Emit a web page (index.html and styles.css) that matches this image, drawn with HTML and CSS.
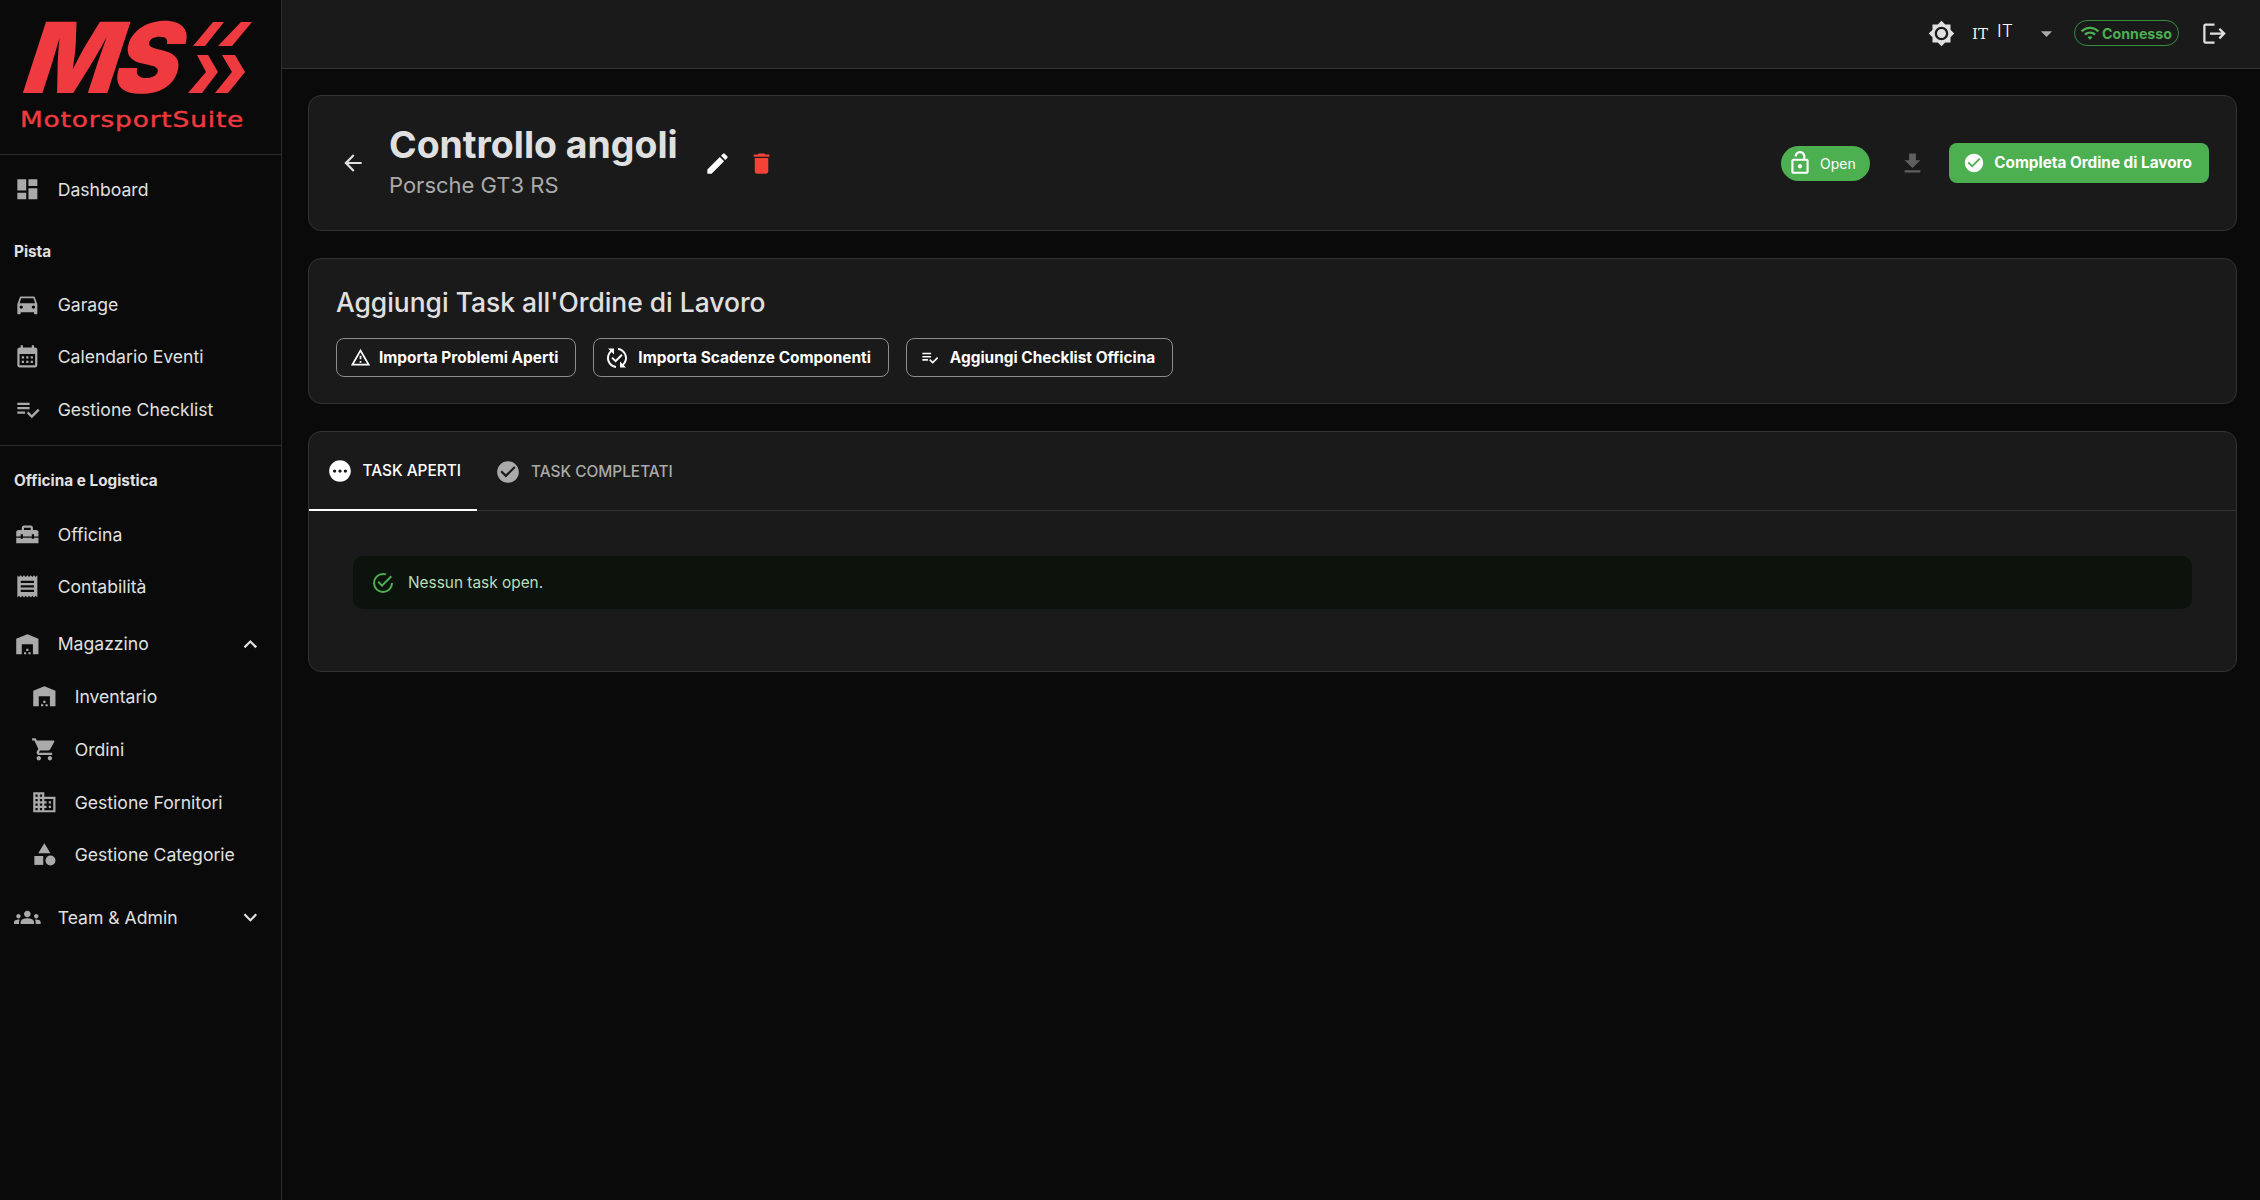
FILE: index.html
```html
<!DOCTYPE html>
<html lang="it">

<head>
    <meta charset="UTF-8">
    <meta name="viewport" content="width=device-width, initial-scale=1.0">
    <title>MotorsportSuite</title>
    <link rel="stylesheet" href="styles.css">
</head>

<body>
    <!-- Sidebar -->
    <aside class="sidebar">
        <div class="logo">
            <div class="logo-mark">
                <span class="logo-ms">MS</span>
                <svg class="logo-chevrons" viewBox="0 0 64 72">
                    <polygon points="25,0 36,0 17,24 5,24" />
                    <polygon points="53,0 64,0 44,24 30,24" />
                    <polygon points="9,33 20,33 30,50 14,71 0,71 18,50" />
                    <polygon points="34,33 47,33 57,50 40,71 27,71 44,50" />
                </svg>
            </div>
            <div class="logo-name">MotorsportSuite</div>
        </div>

        <nav class="nav">
            <a class="nav-item">
                <svg class="nav-icon" viewBox="0 0 24 24"><path d="M3 13h8V3H3v10zm0 8h8v-6H3v6zm10 0h8V11h-8v10zm0-18v6h8V3h-8z" /></svg>
                Dashboard
            </a>

            <div class="nav-label">Pista</div>
            <a class="nav-item">
                <svg class="nav-icon" viewBox="0 0 24 24"><path d="M18.92 6.01C18.72 5.42 18.16 5 17.5 5h-11c-.66 0-1.21.42-1.42 1.01L3 12v8c0 .55.45 1 1 1h1c.55 0 1-.45 1-1v-1h12v1c0 .55.45 1 1 1h1c.55 0 1-.45 1-1v-8l-2.08-5.99zM6.5 16c-.83 0-1.5-.67-1.5-1.5S5.67 13 6.5 13s1.5.67 1.5 1.5S7.33 16 6.5 16zm11 0c-.83 0-1.5-.67-1.5-1.5s.67-1.5 1.5-1.5 1.5.67 1.5 1.5-.67 1.5-1.5 1.5zM5 11l1.5-4.5h11L19 11H5z" /></svg>
                Garage
            </a>
            <a class="nav-item">
                <svg class="nav-icon" viewBox="0 0 24 24"><path d="M19 4h-1V2h-2v2H8V2H6v2H5c-1.11 0-1.99.9-1.99 2L3 20c0 1.1.89 2 2 2h14c1.1 0 2-.9 2-2V6c0-1.1-.9-2-2-2zm0 16H5V10h14v10zM9 14H7v-2h2v2zm4 0h-2v-2h2v2zm4 0h-2v-2h2v2zm-8 4H7v-2h2v2zm4 0h-2v-2h2v2zm4 0h-2v-2h2v2z" /></svg>
                Calendario Eventi
            </a>
            <a class="nav-item">
                <svg class="nav-icon" viewBox="0 0 24 24"><path d="M14 10H3v2h11v-2zm0-4H3v2h11V6zM3 16h7v-2H3v2zm18.5-4.5L23 13l-6.99 7-4.51-4.5L13 14l3.01 3 5.49-5.5z" /></svg>
                Gestione Checklist
            </a>

            <hr class="nav-divider">

            <div class="nav-label">Officina e Logistica</div>
            <a class="nav-item">
                <svg class="nav-icon" viewBox="0 0 24 24"><path d="M18 16h-2v-1H8v1H6v-1H2v5h20v-5h-4zm2-8h-3V6c0-1.1-.9-2-2-2H9c-1.1 0-2 .9-2 2v2H4c-1.1 0-2 .9-2 2v4h4v-2h2v2h8v-2h2v2h4v-4c0-1.1-.9-2-2-2zm-5 0H9V6h6v2z" /></svg>
                Officina
            </a>
            <a class="nav-item">
                <svg class="nav-icon" viewBox="0 0 24 24"><path d="M18 17H6v-2h12v2zm0-4H6v-2h12v2zm0-4H6V7h12v2zM3 22l1.5-1.5L6 22l1.5-1.5L9 22l1.5-1.5L12 22l1.5-1.5L15 22l1.5-1.5L18 22l1.5-1.5L21 22V2l-1.5 1.5L18 2l-1.5 1.5L15 2l-1.5 1.5L12 2l-1.5 1.5L9 2 7.5 3.5 6 2 4.5 3.5 3 2v20z" /></svg>
                Contabilità
            </a>
            <a class="nav-item nav-group">
                <svg class="nav-icon" viewBox="0 0 24 24"><path d="M22 21V7L12 3 2 7v14h5v-9h10v9h5zm-11-2H9v2h2v-2zm2-3h-2v2h2v-2zm2 3h-2v2h2v-2z" /></svg>
                Magazzino
                <svg class="nav-caret" viewBox="0 0 24 24"><path d="M12 8l-6 6 1.41 1.41L12 10.83l4.59 4.58L18 14z" /></svg>
            </a>
            <a class="nav-item nav-sub">
                <svg class="nav-icon" viewBox="0 0 24 24"><path d="M22 21V7L12 3 2 7v14h5v-9h10v9h5zm-11-2H9v2h2v-2zm2-3h-2v2h2v-2zm2 3h-2v2h2v-2z" /></svg>
                Inventario
            </a>
            <a class="nav-item nav-sub">
                <svg class="nav-icon" viewBox="0 0 24 24"><path d="M7 18c-1.1 0-1.99.9-1.99 2S5.9 22 7 22s2-.9 2-2-.9-2-2-2zM1 2v2h2l3.6 7.59-1.35 2.45c-.16.28-.25.61-.25.96 0 1.1.9 2 2 2h12v-2H7.42c-.14 0-.25-.11-.25-.25l.03-.12.9-1.63h7.45c.75 0 1.41-.41 1.75-1.03l3.58-6.49c.08-.14.12-.31.12-.48 0-.55-.45-1-1-1H5.21l-.94-2H1zm16 16c-1.1 0-1.99.9-1.99 2s.89 2 1.99 2 2-.9 2-2-.9-2-2-2z" /></svg>
                Ordini
            </a>
            <a class="nav-item nav-sub">
                <svg class="nav-icon" viewBox="0 0 24 24"><path d="M12 7V3H2v18h20V7H12zM6 19H4v-2h2v2zm0-4H4v-2h2v2zm0-4H4V9h2v2zm0-4H4V5h2v2zm4 12H8v-2h2v2zm0-4H8v-2h2v2zm0-4H8V9h2v2zm0-4H8V5h2v2zm10 12h-8v-2h2v-2h-2v-2h2v-2h-2V9h8v10zm-2-8h-2v2h2v-2zm0 4h-2v2h2v-2z" /></svg>
                Gestione Fornitori
            </a>
            <a class="nav-item nav-sub">
                <svg class="nav-icon" viewBox="0 0 24 24"><path d="M12 2l-5.5 9h11z" /><circle cx="17.5" cy="17.5" r="4.5" /><path d="M3 13.5h8v8H3z" /></svg>
                Gestione Categorie
            </a>
            <a class="nav-item nav-group nav-team">
                <svg class="nav-icon" viewBox="0 0 24 24"><path d="M12 12.75c1.63 0 3.07.39 4.24.9 1.08.48 1.76 1.56 1.76 2.73V18H6v-1.61c0-1.18.68-2.26 1.76-2.73 1.17-.52 2.61-.91 4.24-.91zM4 13c1.1 0 2-.9 2-2s-.9-2-2-2-2 .9-2 2 .9 2 2 2zm1.13 1.1c-.37-.06-.74-.1-1.13-.1-.99 0-1.93.21-2.78.58C.48 14.9 0 15.62 0 16.43V18h4.5v-1.61c0-.83.23-1.61.63-2.29zM20 13c1.1 0 2-.9 2-2s-.9-2-2-2-2 .9-2 2 .9 2 2 2zm4 3.43c0-.81-.48-1.53-1.22-1.85-.85-.37-1.79-.58-2.78-.58-.39 0-.76.04-1.13.1.4.68.63 1.46.63 2.29V18H24v-1.57zM12 6c1.66 0 3 1.34 3 3s-1.34 3-3 3-3-1.34-3-3 1.34-3 3-3z" /></svg>
                Team &amp; Admin
                <svg class="nav-caret" viewBox="0 0 24 24"><path d="M16.59 8.59L12 13.17 7.41 8.59 6 10l6 6 6-6z" /></svg>
            </a>
        </nav>
    </aside>

    <div class="page">
        <!-- Top bar -->
        <header class="topbar">
            <svg class="theme-icon" viewBox="0 0 24 24"><path d="M20 8.69V4h-4.69L12 .69 8.69 4H4v4.69L.69 12 4 15.31V20h4.69L12 23.31 15.31 20H20v-4.69L23.31 12 20 8.69zM12 18c-3.31 0-6-2.69-6-6s2.69-6 6-6 6 2.69 6 6-2.69 6-6 6zm0-10c-2.21 0-4 1.79-4 4s1.79 4 4 4 4-1.79 4-4-1.79-4-4-4z" /></svg>
            <div class="lang">
                <span class="lang-flag">IT</span>
                <span class="lang-code">IT</span>
                <svg class="lang-arrow" viewBox="0 0 24 24"><path d="M7 10l5 5 5-5z" /></svg>
            </div>
            <div class="status-chip">
                <svg viewBox="0 0 24 24"><path d="M1 9l2 2c4.97-4.97 13.03-4.97 18 0l2-2C16.93 2.93 7.08 2.93 1 9zm8 8l3 3 3-3c-1.65-1.66-4.34-1.66-6 0zm-4-4l2 2c2.76-2.76 7.24-2.76 10 0l2-2C15.14 9.14 8.87 9.14 5 13z" /></svg>
                Connesso
            </div>
            <svg class="logout-icon" viewBox="0 0 24 24"><path d="M17 7l-1.41 1.41L18.17 11H8v2h10.17l-2.58 2.58L17 17l5-5zM4 5h8V3H4c-1.1 0-2 .9-2 2v14c0 1.1.9 2 2 2h8v-2H4V5z" /></svg>
        </header>

        <main class="content">
            <!-- Order header -->
            <section class="card order-head">
                <svg class="back-icon" viewBox="0 0 24 24"><path d="M20 11H7.83l5.59-5.59L12 4l-8 8 8 8 1.41-1.41L7.83 13H20v-2z" /></svg>
                <div class="order-title">
                    <h1>Controllo angoli</h1>
                    <p>Porsche GT3 RS</p>
                </div>
                <svg class="edit-icon" viewBox="0 0 24 24"><path d="M3 17.25V21h3.75L17.81 9.94l-3.75-3.75L3 17.25zM20.71 7.04c.39-.39.39-1.02 0-1.41l-2.34-2.34a.9959.9959 0 0 0-1.41 0l-1.83 1.83 3.75 3.75 1.83-1.83z" /></svg>
                <svg class="delete-icon" viewBox="0 0 24 24"><path d="M6 19c0 1.1.9 2 2 2h8c1.1 0 2-.9 2-2V7H6v12zM19 4h-3.5l-1-1h-5l-1 1H5v2h14V4z" /></svg>
                <div class="order-actions">
                    <span class="open-chip">
                        <svg viewBox="0 0 24 24"><path d="M18 8h-1V6c0-2.76-2.24-5-5-5S7 3.24 7 6h2c0-1.66 1.34-3 3-3s3 1.34 3 3v2H6c-1.1 0-2 .9-2 2v10c0 1.1.9 2 2 2h12c1.1 0 2-.9 2-2V10c0-1.1-.9-2-2-2zm0 12H6V10h12v10zm-6-3c1.1 0 2-.9 2-2s-.9-2-2-2-2 .9-2 2 .9 2 2 2z" /></svg>
                        Open
                    </span>
                    <svg class="download-icon" viewBox="0 0 24 24"><path d="M19 9h-4V3H9v6H5l7 7 7-7zM5 18v2h14v-2H5z" /></svg>
                    <button class="complete-btn">
                        <svg viewBox="0 0 24 24"><path d="M12 2C6.48 2 2 6.48 2 12s4.48 10 10 10 10-4.48 10-10S17.52 2 12 2zm-2 15l-5-5 1.41-1.41L10 14.17l7.59-7.59L19 8l-9 9z" /></svg>
                        Completa Ordine di Lavoro
                    </button>
                </div>
            </section>

            <!-- Add tasks -->
            <section class="card add-task">
                <h2>Aggiungi Task all'Ordine di Lavoro</h2>
                <div class="add-buttons">
                    <button class="outline-btn">
                        <svg viewBox="0 0 24 24"><path d="M12 5.99L19.53 19H4.47L12 5.99M12 2L1 21h22L12 2zm1 14h-2v2h2v-2zm0-6h-2v4h2v-4z" /></svg>
                        Importa Problemi Aperti
                    </button>
                    <button class="outline-btn btn-sync">
                        <svg viewBox="0 0 24 24"><path d="M17.66 9.53l-7.07 7.07-4.24-4.24 1.41-1.41 2.83 2.83 5.66-5.66 1.41 1.41zM4 12c0-2.33 1.02-4.42 2.62-5.88L9 8.5v-6H3l2.2 2.2C3.24 6.52 2 9.11 2 12c0 5.19 3.95 9.45 9 9.95v-2.02c-3.94-.49-7-3.86-7-7.93zm18 0c0-5.19-3.95-9.45-9-9.95v2.02c3.94.49 7 3.86 7 7.93 0 2.33-1.02 4.42-2.62 5.88L15 15.5v6h6l-2.2-2.2c1.96-1.82 3.2-4.41 3.2-7.3z" /></svg>
                        Importa Scadenze Componenti
                    </button>
                    <button class="outline-btn btn-list">
                        <svg viewBox="0 0 24 24"><path d="M14 10H3v2h11v-2zm0-4H3v2h11V6zM3 16h7v-2H3v2zm18.5-4.5L23 13l-6.99 7-4.51-4.5L13 14l3.01 3 5.49-5.5z" /></svg>
                        Aggiungi Checklist Officina
                    </button>
                </div>
            </section>

            <!-- Tasks -->
            <section class="card tasks">
                <div class="tabs">
                    <div class="tab tab-active">
                        <svg viewBox="0 0 24 24"><path d="M12 2C6.48 2 2 6.48 2 12s4.48 10 10 10 10-4.48 10-10S17.52 2 12 2zM7 13.5c-.83 0-1.5-.67-1.5-1.5s.67-1.5 1.5-1.5 1.5.67 1.5 1.5-.67 1.5-1.5 1.5zm5 0c-.83 0-1.5-.67-1.5-1.5s.67-1.5 1.5-1.5 1.5.67 1.5 1.5-.67 1.5-1.5 1.5zm5 0c-.83 0-1.5-.67-1.5-1.5s.67-1.5 1.5-1.5 1.5.67 1.5 1.5-.67 1.5-1.5 1.5z" /></svg>
                        TASK APERTI
                    </div>
                    <div class="tab">
                        <svg viewBox="0 0 24 24"><path d="M12 2C6.48 2 2 6.48 2 12s4.48 10 10 10 10-4.48 10-10S17.52 2 12 2zm-2 15l-5-5 1.41-1.41L10 14.17l7.59-7.59L19 8l-9 9z" /></svg>
                        TASK COMPLETATI
                    </div>
                </div>
                <div class="tab-body">
                    <div class="alert">
                        <svg viewBox="0 0 24 24"><path d="M20,12A8,8 0 0,1 12,20A8,8 0 0,1 4,12A8,8 0 0,1 12,4C12.76,4 13.5,4.11 14.2,4.31L15.77,2.74C14.61,2.26 13.34,2 12,2A10,10 0 0,0 2,12A10,10 0 0,0 12,22A10,10 0 0,0 22,12M7.91,10.08L6.5,11.5L11,16L21,6L19.59,4.58L11,13.17L7.91,10.08Z" /></svg>
                        Nessun task open.
                    </div>
                </div>
            </section>
        </main>
    </div>
</body>

</html>
```

FILE: styles.css
```css
body {
    font-family: Inter, "Liberation Sans", sans-serif;
    background-color: #0a0a0a;
    color: #e0e0e0;
    margin: 0;
    height: 100vh;
    display: flex;
    overflow: hidden;
}

svg {
    fill: currentColor;
    flex-shrink: 0;
}

/* Sidebar */
.sidebar {
    width: 281px;
    flex-shrink: 0;
    border-right: 1px solid #2c2c2c;
}

.logo {
    height: 155px;
    box-sizing: border-box;
    border-bottom: 1px solid #2c2c2c;
    padding: 22px 0 0 18px;
    color: #ef3a3f;
}

.logo-mark {
    display: flex;
    height: 72px;
}

.logo-ms {
    font-size: 98px;
    font-weight: 900;
    line-height: 72px;
    letter-spacing: -4px;
    width: 170px;
    transform: skewX(-18deg);
    transform-origin: left bottom;
}

.logo-chevrons {
    width: 64px;
    height: 72px;
}

.logo-chevrons polygon {
    fill: #ef3a3f;
}

.logo-name {
    font-family: "DejaVu Sans", sans-serif;
    font-size: 22px;
    line-height: 28px;
    margin-top: 12px;
    margin-left: 2px;
    letter-spacing: 0.7px;
    -webkit-text-stroke: 0.4px #ef3a3f;
    transform: scaleX(1.2);
    transform-origin: left center;
}

.nav {
    padding-top: 8px;
}

.nav-item {
    height: 52.7px;
    display: flex;
    align-items: center;
    padding-left: 14px;
    font-size: 17.6px;
    color: #e0e0e0;
}

.nav-icon {
    width: 26.7px;
    height: 26.7px;
    margin-right: 17px;
    color: #aaaaaa;
}

.nav-sub {
    padding-left: 31px;
}

.nav-group {
    margin-top: 4.5px;
}

.nav-team {
    margin-top: 10px;
}

.nav-caret {
    width: 26.7px;
    height: 26.7px;
    margin-left: auto;
    margin-right: 17px;
}

.nav-label {
    height: 62px;
    box-sizing: border-box;
    padding: 26px 0 0 14px;
    font-size: 15.3px;
    line-height: 20px;
    font-weight: 700;
}

.nav-divider {
    border: none;
    border-top: 1px solid #2c2c2c;
    margin: 9px 0 0;
}

.nav-divider + .nav-label {
    height: 62px;
    padding-top: 25px;
}

/* Top bar */
.page {
    flex: 1;
    min-width: 0;
}

.topbar {
    height: 69px;
    box-sizing: border-box;
    background-color: #1a1a1a;
    border-bottom: 1px solid #333333;
    display: flex;
    align-items: center;
    justify-content: flex-end;
    padding: 0 32px 2px 0;
}

.theme-icon {
    width: 27px;
    height: 27px;
    margin-right: 17px;
}

.lang {
    display: flex;
    align-items: center;
    width: 88px;
    margin-right: 14px;
}

.lang-flag {
    font-family: "DejaVu Serif", serif;
    font-size: 15px;
    margin-top: 1px;
    width: 25px;
    color: #f2f2f2;
}

.lang-code {
    font-size: 17.8px;
    font-weight: 300;
    color: #ffffff;
    margin-top: -5px;
}

.lang-arrow {
    width: 27px;
    height: 27px;
    margin-left: auto;
    color: #aaaaaa;
}

.status-chip {
    width: 105px;
    height: 26px;
    box-sizing: border-box;
    border: 1px solid #388e3c;
    border-radius: 13px;
    display: flex;
    align-items: center;
    justify-content: center;
    gap: 2px;
    color: #4caf50;
    font-size: 14.2px;
    font-weight: 700;
    margin-right: 22px;
    padding-right: 1px;
}

.status-chip svg {
    width: 20px;
    height: 20px;
}

.logout-icon {
    width: 27px;
    height: 27px;
}

/* Cards */
.content {
    padding: 26px 23px 0 26px;
    display: flex;
    flex-direction: column;
    gap: 27px;
}

.card {
    background-color: #1a1a1a;
    border: 1px solid #333333;
    border-radius: 13px;
}

.order-head {
    height: 136px;
    box-sizing: border-box;
    display: flex;
    align-items: center;
    padding: 0 27px 0 31px;
}

.back-icon {
    width: 26px;
    height: 26px;
    margin-right: 23px;
}

.order-title {
    margin-bottom: 3px;
}

.order-title h1 {
    margin: 0;
    font-size: 37.4px;
    line-height: 48px;
    font-weight: 700;
}

.order-title p {
    margin: 0;
    font-size: 22px;
    line-height: 33px;
    color: #aaaaaa;
}

.edit-icon {
    width: 27px;
    height: 27px;
    margin-left: 26px;
    color: #ffffff;
}

.delete-icon {
    width: 27px;
    height: 27px;
    margin-left: 17px;
    color: #f44336;
}

.order-actions {
    margin-left: auto;
    display: flex;
    align-items: center;
}

.open-chip {
    width: 89px;
    height: 35px;
    box-sizing: border-box;
    padding-left: 6px;
    border-radius: 18px;
    background-color: #4caf50;
    color: #ffffff;
    font-size: 14px;
    display: flex;
    align-items: center;
    gap: 7px;
}

.open-chip svg {
    width: 26px;
    height: 26px;
}

.download-icon {
    width: 27px;
    height: 27px;
    color: #5f5f5f;
    margin: 0 23px 0 29px;
}

.complete-btn {
    width: 260px;
    height: 40px;
    border: none;
    border-radius: 8px;
    background-color: #4caf50;
    color: #ffffff;
    font-family: inherit;
    font-size: 15.3px;
    font-weight: 700;
    display: flex;
    align-items: center;
    justify-content: center;
    gap: 9px;
    padding: 0 3px 1px 0;
}

.complete-btn svg {
    width: 22px;
    height: 22px;
}

/* Add tasks */
.add-task {
    height: 146px;
    box-sizing: border-box;
    padding: 26px 27px 0;
}

.add-task h2 {
    margin: 0 0 19px;
    font-size: 26.4px;
    line-height: 34px;
    font-weight: 500;
}

.add-buttons {
    display: flex;
    gap: 17px;
}

.outline-btn {
    height: 39px;
    padding: 0 17px 0 13px;
    background: none;
    border: 1px solid #8c8c8c;
    border-radius: 8px;
    color: #ffffff;
    font-family: inherit;
    font-size: 15.4px;
    font-weight: 700;
    display: flex;
    align-items: center;
    gap: 8px;
}

.outline-btn svg {
    width: 21px;
    height: 21px;
}

.btn-sync {
    padding-left: 11px;
    gap: 9px;
}

.btn-sync svg {
    width: 24px;
    height: 24px;
}

.btn-list {
    gap: 11px;
}

.btn-list svg {
    width: 19px;
    height: 19px;
}

/* Tabs */
.tasks {
    height: 241px;
    box-sizing: border-box;
}

.tabs {
    height: 79px;
    box-sizing: border-box;
    border-bottom: 1px solid #333333;
    display: flex;
}

.tab {
    height: 79px;
    box-sizing: border-box;
    display: flex;
    align-items: center;
    gap: 9.5px;
    padding: 0 16.5px 0 18px;
    font-size: 15.4px;
    font-weight: 500;
    color: #aaaaaa;
}

.tab svg {
    width: 26px;
    height: 26px;
}

.tab-active {
    color: #ffffff;
    border-bottom: 2px solid #ffffff;
}

.tab-body {
    padding: 45px 44px 0;
}

.alert {
    height: 53px;
    background-color: #0c130c;
    border-radius: 10px;
    display: flex;
    align-items: center;
    gap: 13px;
    padding-left: 18px;
    font-size: 15.4px;
    color: #b7dfb9;
}

.alert svg {
    width: 24px;
    height: 24px;
    color: #4caf50;
}
```
